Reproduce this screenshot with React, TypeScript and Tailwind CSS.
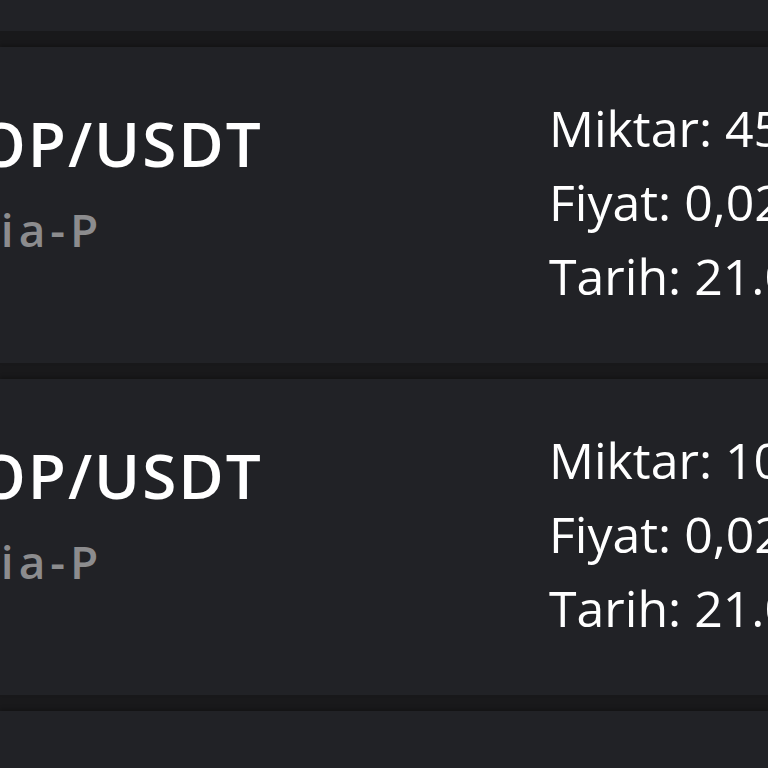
import React from 'react';

type Trade = {
  pair: string;
  exchange: string;
  amount: string;
  price: string;
  date: string;
};

const trades: Trade[] = [
  { pair: 'OP/USDT', exchange: 'Asia-P', amount: '4500', price: '0,0214 USDT', date: '21.05.2024 14:32' },
  { pair: 'OP/USDT', exchange: 'Asia-P', amount: '1000', price: '0,0209 USDT', date: '21.05.2024 13:08' },
  { pair: 'OP/USDT', exchange: 'Asia-P', amount: '2500', price: '0,0198 USDT', date: '20.05.2024 22:41' },
];

const TradeCard: React.FC<{ trade: Trade }> = ({ trade }) => (
  <div className="h-[316px] shrink-0 bg-[#212226] shadow-[0_-2px_4px_rgba(0,0,0,0.25)] flex items-start">
    {/* Pair + exchange */}
    <div className="shrink-0 w-[572px] -ml-[23px] pt-[56px]">
      <div className="text-[62px] leading-[80px] font-semibold tracking-[2px] text-white whitespace-nowrap">
        {trade.pair}
      </div>
      <div className="text-[46px] leading-[92px] font-semibold tracking-[5px] text-[#8c8c8e] whitespace-nowrap -ml-[39px]">
        {trade.exchange}
      </div>
    </div>

    {/* Details */}
    <div className="shrink-0 pt-[44px] text-[50px] leading-[74px] font-medium text-white whitespace-nowrap">
      <div>Miktar: {trade.amount}</div>
      <div>Fiyat: {trade.price}</div>
      <div>Tarih: {trade.date}</div>
    </div>
  </div>
);

export default function App() {
  return (
    <div
      className="h-[768px] w-[768px] overflow-hidden bg-[#19191b] flex flex-col gap-[16px]"
      style={{ fontFamily: '"Open Sans", "Noto Sans", sans-serif' }}
    >
      <div className="h-[316px] shrink-0 -mt-[285px] bg-[#212226]" />
      {trades.map((t, i) => (
        <TradeCard key={i} trade={t} />
      ))}
    </div>
  );
}
